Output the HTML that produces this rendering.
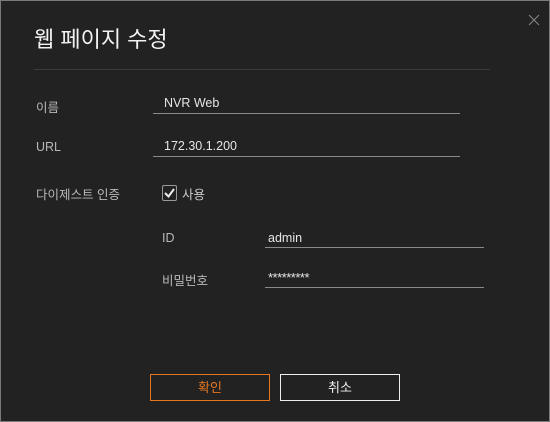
<!DOCTYPE html><html><head><style>
body{margin:0;width:550px;height:422px;overflow:hidden;background:#222;font-family:"Liberation Sans","Noto Sans CJK KR",sans-serif}
.f{position:absolute;left:0;top:0;width:548px;height:420px;border:1px solid #7a7a7a;background:#222}
.a{position:absolute;white-space:nowrap}
.l{color:#b8b8b8;font-size:12.5px}
.v{color:#e6e6e6;font-size:12.5px}
.ln{position:absolute;height:0;border-top:1px solid #8a8a8a}
.b{position:absolute;top:373px;width:118px;height:25px;font-size:13px;text-align:center;line-height:25px}
</style></head><body><div class="f">
<div class="a" style="left:33px;top:21px;font-size:22px;color:#f2f2f2">웹 페이지 수정</div>
<svg class="a" style="left:527px;top:13px" width="12" height="12"><path d="M1 1L11 11M11 1L1 11" stroke="#888" stroke-width="1"/></svg>
<div class="a" style="left:33px;top:68px;width:456px;height:1px;background:#3c3c3c"></div>
<div class="a l" style="left:35px;top:96px">이름</div>
<div class="a v" style="left:163px;top:95px">NVR Web</div>
<div class="ln" style="left:152px;top:112px;width:307px"></div>
<div class="a l" style="left:35px;top:139px">URL</div>
<div class="a v" style="left:163px;top:138px">172.30.1.200</div>
<div class="ln" style="left:152px;top:155px;width:307px"></div>
<div class="a l" style="left:35px;top:183px">다이제스트 인증</div>
<div class="a" style="left:161px;top:184px;width:13px;height:14px;border:1px solid #999;border-radius:2px"></div>
<svg class="a" style="left:161px;top:184px" width="15" height="16"><path d="M3 8L6.5 11.5L12 4" stroke="#eee" stroke-width="2" fill="none"/></svg>
<div class="a v" style="left:181px;top:183px;color:#ccc">사용</div>
<div class="a l" style="left:161px;top:230px">ID</div>
<div class="a v" style="left:267px;top:230px">admin</div>
<div class="ln" style="left:264px;top:246px;width:219px"></div>
<div class="a l" style="left:161px;top:269px">비밀번호</div>
<div class="a v" style="left:267px;top:269px;font-size:13px;letter-spacing:-0.5px">*********</div>
<div class="ln" style="left:264px;top:286px;width:219px"></div>
<div class="b" style="left:149px;border:1px solid #e8761f;color:#e8761f">확인</div>
<div class="b" style="left:279px;border:1px solid #eee;color:#eee">취소</div>
</div></body></html>
